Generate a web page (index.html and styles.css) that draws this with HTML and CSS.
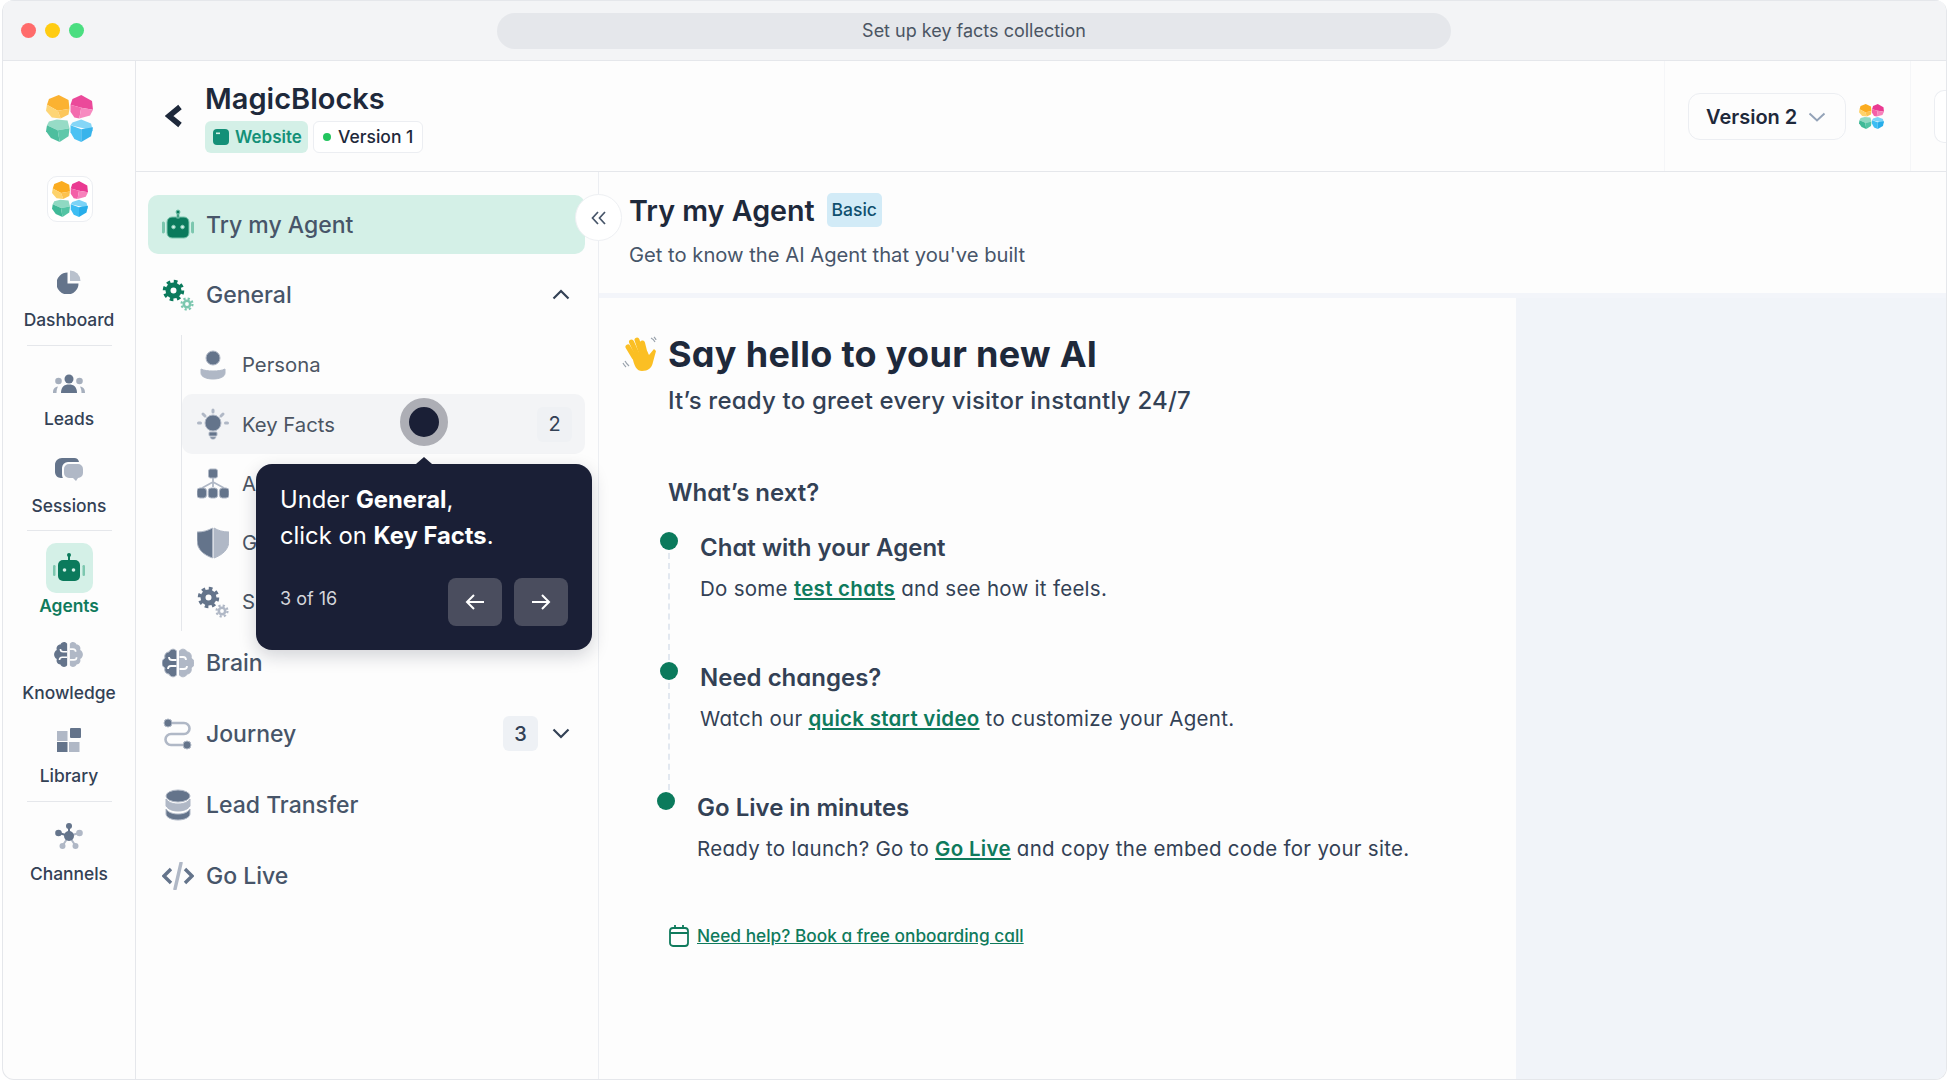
FILE: index.html
```html
<!DOCTYPE html>
<html lang="en">
<head>
    <meta charset="UTF-8">
    <meta name="viewport" content="width=device-width, initial-scale=1.0">
    <title>Try my Agent</title>
    <link rel="stylesheet" href="styles.css">
</head>

<body>
    <svg class="sprites" width="0" height="0">
        <symbol id="logo" viewBox="0 0 48 48">
            <polygon points="13,0 23,5 24,14 12,16 1,10 3,4" fill="#fbac20"/>
            <polygon points="1,10 12,16 15,24 6,23 0,16" fill="#fdd26b"/>
            <polygon points="12,16 24,14 23,20 15,24" fill="#fcc24e"/>
            <polygon points="36,0 47,6 48,15 36,13 25,10 27,4" fill="#ea3a92"/>
            <polygon points="25,10 36,13 34,24 29,23 25,17" fill="#f35fa8"/>
            <polygon points="36,13 48,15 45,21 34,24" fill="#f781bb"/>
            <polygon points="11,25 22,26 24,34 12,36 1,31 3,27" fill="#8fd9c2"/>
            <polygon points="1,31 12,36 14,48 5,44 0,37" fill="#3fb997"/>
            <polygon points="12,36 24,34 23,42 14,48" fill="#52c4a4"/>
            <polygon points="36,25 46,29 48,37 38,34 25,31 27,28" fill="#7bd3f7"/>
            <polygon points="25,31 36,35 36,48 29,45 25,38" fill="#3dbdf3"/>
            <polygon points="36,35 48,33 46,42 36,48" fill="#28aeea"/>
        </symbol>
        <symbol id="robot" viewBox="0 0 32 32">
            <rect x="5" y="8" width="22" height="21" rx="5" fill="currentColor"/>
            <rect x="15" y="3" width="2" height="6" fill="currentColor"/>
            <circle cx="16" cy="3" r="2" fill="currentColor"/>
            <circle cx="11.5" cy="18" r="1.8" fill="#d4f0e7"/>
            <circle cx="20.5" cy="18" r="1.8" fill="#d4f0e7"/>
            <rect x="0" y="13" width="2.5" height="11" rx="1.2" fill="#7cc7af"/>
            <rect x="29.5" y="13" width="2.5" height="11" rx="1.2" fill="#7cc7af"/>
        </symbol>
        <symbol id="gears" viewBox="0 0 32 32">
            <g fill="none" stroke="currentColor">
                <circle cx="11.5" cy="11.5" r="5.5" stroke-width="5"/>
                <circle cx="11.5" cy="11.5" r="9" stroke-width="3.5" stroke-dasharray="3.6 3.47"/>
            </g>
            <g fill="none" class="tone">
                <circle cx="25" cy="25" r="3.2" stroke-width="2.6"/>
                <circle cx="25" cy="25" r="5.5" stroke-width="2.2" stroke-dasharray="2.2 2.12"/>
            </g>
        </symbol>
        <symbol id="pie" viewBox="0 0 24 24">
            <path d="M10.5 2.5v11h11a11 11 0 1 1-11-11z" fill="#64748b"/>
            <path d="M13 0.5a10.5 10.5 0 0 1 10.5 10.5H13z" fill="#b9c1cd"/>
        </symbol>
        <symbol id="people" viewBox="0 0 32 20">
            <circle cx="16" cy="5" r="4.5" fill="#64748b"/>
            <path d="M8 19c0-6 3-8.500 8-8.500s8 2.500 8 8.500z" fill="#64748b"/>
            <circle cx="5.500" cy="7" r="3.300" fill="#a6afbd"/>
            <circle cx="26.500" cy="7" r="3.300" fill="#a6afbd"/>
            <path d="M0 19c0-4 1.500-6 5-6.500-1 2-1.500 4-1.500 6.500z" fill="#a6afbd"/>
            <path d="M32 19c0-4-1.500-6-5-6.500 1 2 1.500 4 1.500 6.500z" fill="#a6afbd"/>
        </symbol>
        <symbol id="chat" viewBox="0 0 28 24">
            <path d="M7 0h12a5 5 0 0 1 5 4H13a6 6 0 0 0-6 6v6c0 1.500 .3 3 1 4H6c-3.500 0-6-3-6-6V7c0-4 3-7 7-7z" fill="#64748b"/>
            <path d="M14 6h9a5 5 0 0 1 5 5v4a5 5 0 0 1-5 5l-2 3-3-3h-4a5 5 0 0 1-5-5v-4a5 5 0 0 1 5-5z" fill="#b0b8c6"/>
        </symbol>
        <symbol id="brain" viewBox="0 0 32 30">
            <path d="M14.500 3c-2-3-6.500-2-7.500 1-3 0-5 3-4 6-2 1-3 3-3 5s1 4 3 5c-1 3 1 6 4 6 1 3 5.500 4 7.500 1z" fill="#64748b"/>
            <path d="M17.500 3c2-3 6.500-2 7.500 1 3 0 5 3 4 6 2 1 3 3 3 5s-1 4-3 5c1 3-1 6-4 6-1 3-5.500 4-7.500 1z" fill="#b0b8c6"/>
            <path d="M14.500 12H10a3 3 0 0 1-3-3M14.500 18H9a3 3 0 0 0-3 3M17.500 9H21a3 3 0 0 1 3 3M17.500 21H22a3 3 0 0 0 3-3" fill="none" stroke="#fdfdfd" stroke-width="1.800"/>
        </symbol>
        <symbol id="squares" viewBox="0 0 24 24">
            <rect x="0" y="3" width="10.500" height="10" fill="#b0b8c6"/>
            <rect x="13" y="0" width="11" height="10" rx="1" fill="#64748b"/>
            <rect x="0" y="14" width="10.500" height="10" fill="#64748b"/>
            <rect x="12" y="14" width="10.500" height="10" fill="#b0b8c6"/>
        </symbol>
        <symbol id="nodes" viewBox="0 0 28 26">
            <g stroke="#64748b" stroke-width="2"><path d="M14 3v10M4 10l10 3"/></g>
            <g stroke="#b0b8c6" stroke-width="2"><path d="M14 13l10-3M14 13l-6 9M14 13l6 9"/></g>
            <circle cx="14" cy="13" r="5" fill="#64748b"/>
            <circle cx="14" cy="3" r="3" fill="#64748b"/>
            <circle cx="3.500" cy="10" r="3.300" fill="#64748b"/>
            <circle cx="24.500" cy="10" r="3.300" fill="#b0b8c6"/>
            <circle cx="7.500" cy="23" r="3" fill="#b0b8c6"/>
            <circle cx="20.500" cy="23" r="3" fill="#b0b8c6"/>
        </symbol>
    </svg>

    <div class="window">
        <header class="titlebar">
            <div class="lights">
                <span class="light light-red"></span>
                <span class="light light-yellow"></span>
                <span class="light light-green"></span>
            </div>
            <div class="address">Set up key facts collection</div>
        </header>

        <div class="app">
            <nav class="rail">
                <svg class="rail-logo"><use href="#logo"/></svg>
                <div class="rail-workspace"><svg><use href="#logo"/></svg></div>

                <a class="rail-item rail-dashboard"><svg width="24" height="24"><use href="#pie"/></svg><span>Dashboard</span></a>
                <hr class="rail-sep rail-sep-1">
                <a class="rail-item rail-leads"><svg width="32" height="20"><use href="#people"/></svg><span>Leads</span></a>
                <a class="rail-item rail-sessions"><svg width="28" height="24"><use href="#chat"/></svg><span>Sessions</span></a>
                <hr class="rail-sep rail-sep-2">
                <a class="rail-item rail-agents">
                    <span class="rail-active"><svg width="32" height="32"><use href="#robot"/></svg></span>
                    <span>Agents</span>
                </a>
                <a class="rail-item rail-knowledge"><svg width="29" height="27"><use href="#brain"/></svg><span>Knowledge</span></a>
                <a class="rail-item rail-library"><svg width="24" height="24"><use href="#squares"/></svg><span>Library</span></a>
                <hr class="rail-sep rail-sep-3">
                <a class="rail-item rail-channels"><svg width="28" height="26"><use href="#nodes"/></svg><span>Channels</span></a>
            </nav>

            <div class="workspace">
                <div class="topbar">
                    <svg class="back" width="18" height="24" viewBox="0 0 18 24"><path d="M15 3L4 12l11 9" fill="none" stroke="#1e293b" stroke-width="5.500"/></svg>
                    <div class="topbar-title">
                        <h1>MagicBlocks</h1>
                        <div class="tags">
                            <span class="tag tag-site">
                                <svg width="16" height="16" viewBox="0 0 16 16"><rect width="16" height="16" rx="4" fill="#149078"/><rect x="3" y="3.500" width="4" height="1.600" fill="#d4f0e7"/></svg>
                                Website
                            </span>
                            <span class="tag tag-version"><i class="tag-dot"></i>Version 1</span>
                        </div>
                    </div>
                    <div class="topbar-right">
                        <button class="version-btn">
                            Version 2
                            <svg width="18" height="10" viewBox="0 0 18 10"><path d="M1.500 1.500L9 8.500l7.500-7" fill="none" stroke="#94a3b8" stroke-width="2"/></svg>
                        </button>
                        <svg class="mini-logo"><use href="#logo"/></svg>
                    </div>
                    <div class="topbar-edge"><div class="edge-btn"></div></div>
                </div>

                <div class="columns">
                    <aside class="sidebar">
                        <a class="row row-active">
                            <svg class="row-icon icon-green" width="32" height="32"><use href="#robot"/></svg>
                            Try my Agent
                        </a>
                        <a class="row row-open">
                            <svg class="row-icon icon-green gears-green" width="32" height="32"><use href="#gears"/></svg>
                            General
                            <svg class="caret" width="18" height="11" viewBox="0 0 18 11"><path d="M1.500 9.500L9 2l7.500 7.500" fill="none" stroke="#334155" stroke-width="2.200"/></svg>
                        </a>
                        <div class="sublist">
                            <a class="subrow">
                                <svg class="row-icon" width="32" height="32" viewBox="0 0 32 32"><circle cx="16" cy="9" r="7" fill="#64748b"/><path d="M4 20c3 1.500 7 2 12 2s9-.5 12-2v4c0 4-6 6-12 6S4 28 4 24z" fill="#b0b8c6"/></svg>
                                Persona
                            </a>
                            <a class="subrow subrow-hover">
                                <svg class="row-icon" width="32" height="32" viewBox="0 0 32 32"><circle cx="16" cy="15" r="8" fill="#64748b"/><rect x="12" y="24" width="8" height="4" rx="1" fill="#64748b"/><path d="M13 29h6l-1.500 2h-3z" fill="#64748b"/><g stroke="#b0b8c6" stroke-width="3" stroke-linecap="round"><path d="M16 2v2M6 6l2 2M26 6l-2 2M1.500 15h2M28.500 15h2"/></g></svg>
                                Key Facts
                                <span class="count count-sub">2</span>
                            </a>
                            <a class="subrow">
                                <svg class="row-icon" width="32" height="32" viewBox="0 0 32 32"><rect x="11.500" y="1" width="9" height="9" rx="2" fill="#64748b"/><path d="M16 10v9M16 14L5 20M16 14l11 6" fill="none" stroke="#b0b8c6" stroke-width="1.800"/><rect x="0" y="20" width="9.500" height="10" rx="3" fill="#64748b"/><rect x="11.200" y="20" width="9.500" height="10" rx="3" fill="#64748b"/><rect x="22.500" y="20" width="9.500" height="10" rx="3" fill="#64748b"/></svg>
                                A
                            </a>
                            <a class="subrow">
                                <svg class="row-icon" width="32" height="32" viewBox="0 0 32 32"><path d="M15.500 1v30C7 28 0 23 0 13V5c6 0 11-1.500 15.500-4z" fill="#64748b"/><path d="M17 1v30c8-3 15-8 15-18V5c-6 0-11-1.500-15-4z" fill="#b0b8c6"/></svg>
                                G
                            </a>
                            <a class="subrow">
                                <svg class="row-icon" width="32" height="32"><use href="#gears"/></svg>
                                S
                            </a>
                        </div>
                        <a class="row">
                            <svg class="row-icon" width="32" height="30"><use href="#brain"/></svg>
                            Brain
                        </a>
                        <a class="row">
                            <svg class="row-icon" width="32" height="32" viewBox="0 0 32 32"><path d="M8 5h14a5.500 5.500 0 0 1 0 11H9a5.500 5.500 0 0 0 0 11h14" fill="none" stroke="#b0b8c6" stroke-width="2.600"/><circle cx="6" cy="5" r="4" fill="#64748b"/><circle cx="25" cy="27" r="4" fill="#64748b"/></svg>
                            Journey
                            <span class="count">3</span>
                            <svg class="caret caret-after" width="18" height="11" viewBox="0 0 18 11"><path d="M1.500 1.500L9 9l7.500-7.500" fill="none" stroke="#334155" stroke-width="2.200"/></svg>
                        </a>
                        <a class="row">
                            <svg class="row-icon" width="32" height="32" viewBox="0 0 32 32"><ellipse cx="16" cy="7" rx="12" ry="6" fill="#64748b"/><path d="M4 10c2 3 6 5 12 5s10-2 12-5v7c-2 3-6 5-12 5S6 20 4 17z" fill="#b0b8c6"/><path d="M4 20c2 3 6 5 12 5s10-2 12-5v5c0 3-5 6-12 6S4 28 4 25z" fill="#64748b"/></svg>
                            Lead Transfer
                        </a>
                        <a class="row">
                            <svg class="row-icon" width="32" height="28" viewBox="0 0 32 28"><path d="M9 7L2 14l7 7M23 7l7 7-7 7" fill="none" stroke="#64748b" stroke-width="3.400"/><path d="M19 1l-6 26" stroke="#b0b8c6" stroke-width="3.400" stroke-linecap="round"/></svg>
                            Go Live
                        </a>

                        <div class="collapse-btn">
                            <svg width="16" height="14" viewBox="0 0 16 14"><path d="M7 1L1.500 7 7 13M14 1L8.500 7l5.500 6" fill="none" stroke="#475569" stroke-width="1.700"/></svg>
                        </div>

                        <div class="pulse"></div>

                        <div class="tour">
                            <p>Under <b>General</b>,<br>click on <b>Key Facts</b>.</p>
                            <div class="tour-foot">
                                <span class="tour-count">3 of 16</span>
                                <div class="tour-btns">
                                    <button class="tour-btn"><svg width="20" height="16" viewBox="0 0 20 16"><path d="M19 8H2M9 1L2 8l7 7" fill="none" stroke="#fff" stroke-width="2"/></svg></button>
                                    <button class="tour-btn"><svg width="20" height="16" viewBox="0 0 20 16"><path d="M1 8h17M11 1l7 7-7 7" fill="none" stroke="#fff" stroke-width="2"/></svg></button>
                                </div>
                            </div>
                        </div>
                    </aside>

                    <main class="content">
                        <div class="page-head">
                            <div class="page-title">
                                <h2>Try my Agent</h2>
                                <span class="plan">Basic</span>
                            </div>
                            <p>Get to know the AI Agent that you've built</p>
                        </div>

                        <div class="page-body">
                            <section class="panel">
                                <div class="hello">
                                    <svg class="wave" width="36" height="36" viewBox="0 0 36 36">
                                        <g stroke="#fbbf24" stroke-width="5" stroke-linecap="round">
                                            <path d="M12 21L6 11"/><path d="M15 18L9.500 6"/><path d="M19 16L15 4"/><path d="M23 17L20.500 7"/>
                                        </g>
                                        <path d="M10 19l15-4 2 4 5-6 2 2-3 11c-1 6-5 9-11 9-5 0-8-4-10-16z" fill="#fbbf24"/>
                                        <path d="M3 25c1 2 2 3 4 5M1 27c1 2 2 3 3 4M29 2c2 1 3 2 4 4M32 1c1 1 2 2 2 3" fill="none" stroke="#9aa3ad" stroke-width="1.200"/>
                                    </svg>
                                    <h3>Say hello to your new AI</h3>
                                </div>
                                <p class="hello-sub">It’s ready to greet every visitor instantly 24/7</p>

                                <h4 class="next">What’s next?</h4>

                                <div class="step">
                                    <div class="step-mark"><i class="step-dot"></i><i class="step-line"></i></div>
                                    <div>
                                        <h5>Chat with your Agent</h5>
                                        <p>Do some <a>test chats</a> and see how it feels.</p>
                                    </div>
                                </div>
                                <div class="step">
                                    <div class="step-mark"><i class="step-dot"></i><i class="step-line"></i></div>
                                    <div>
                                        <h5>Need changes?</h5>
                                        <p>Watch our <a>quick start video</a> to customize your Agent.</p>
                                    </div>
                                </div>
                                <div class="step step-last">
                                    <div class="step-mark"><i class="step-dot"></i></div>
                                    <div>
                                        <h5>Go Live in minutes</h5>
                                        <p>Ready to launch? Go to <a>Go Live</a> and copy the embed code for your site.</p>
                                    </div>
                                </div>

                                <a class="help">
                                    <svg width="20" height="22" viewBox="0 0 20 22"><rect x="1" y="3" width="18" height="18" rx="3" fill="none" stroke="#0f7a5c" stroke-width="1.800"/><path d="M1 8h18M6 0v4M14 0v4" fill="none" stroke="#0f7a5c" stroke-width="1.800"/></svg>
                                    <span>Need help? Book a free onboarding call</span>
                                </a>
                            </section>
                            <div class="gutter"></div>
                        </div>
                    </main>
                </div>
            </div>
        </div>
    </div>
</body>
</html>
```

FILE: styles.css
```css
* {
    box-sizing: border-box;
}

body {
    font-family: Inter, "Liberation Sans", sans-serif;
    margin: 0;
    background: #ffffff;
    color: #1e293b;
    overflow: hidden;
}

a {
    text-decoration: none;
}

h1, h2, h3, h4, h5, p {
    margin: 0;
}

.sprites {
    position: absolute;
}

.window {
    width: 1945px;
    height: 1080px;
    margin-left: 2px;
    border: 1px solid #e5e7eb;
    border-top: 0;
    border-radius: 12px;
    overflow: hidden;
    display: flex;
    flex-direction: column;
    background: #fdfdfd;
}

/* title bar */
.titlebar {
    height: 61px;
    flex: none;
    background: #f3f4f6;
    border-top: 1px solid #e5e7eb;
    border-bottom: 1px solid #e5e7eb;
    display: flex;
    align-items: center;
    position: relative;
    padding-left: 18px;
}

.lights {
    display: flex;
    gap: 9px;
}

.light {
    width: 15px;
    height: 15px;
    border-radius: 50%;
}

.light-red { background: #ff6b6b; }
.light-yellow { background: #ffcc12; }
.light-green { background: #4ade80; }

.address {
    margin-left: 413px;
    width: 954px;
    height: 36px;
    border-radius: 18px;
    background: #e5e7eb;
    color: #4b5563;
    font-size: 18px;
    line-height: 36px;
    text-align: center;
}

.app {
    flex: 1;
    display: flex;
    min-height: 0;
}

/* left rail */
.rail {
    width: 133px;
    flex: none;
    border-right: 1px solid #e5e7eb;
    display: flex;
    flex-direction: column;
    align-items: center;
    padding-top: 34px;
}

.rail-logo {
    width: 47px;
    height: 47px;
    opacity: 0.92;
    margin-left: 1px;
}

.rail-workspace {
    width: 46px;
    height: 46px;
    margin-top: 34px;
    margin-left: 1px;
    padding: 4px;
    background: #fff;
    border: 1px solid #eceef2;
    border-radius: 10px;
    display: flex;
}

.rail-workspace svg {
    width: 36px;
    height: 36px;
}

.rail-item {
    display: flex;
    flex-direction: column;
    align-items: center;
    font-size: 17.4px;
    font-weight: 500;
    color: #334155;
    line-height: 22px;
}

.rail-item svg {
    display: block;
}

.rail-dashboard { margin-top: 48px; gap: 15px; }
.rail-leads { margin-top: 28px; gap: 14px; }
.rail-sessions { margin-top: 28px; gap: 13px; }
.rail-agents { margin-top: 12px; gap: 2px; color: #0f7a5c; font-weight: 600; }
.rail-knowledge { margin-top: 24px; gap: 14px; }
.rail-library { margin-top: 24px; gap: 13px; }
.rail-channels { margin-top: 21px; gap: 14px; }

.rail-sep {
    width: 85px;
    height: 1px;
    border: 0;
    margin: 0;
    background: #e5e7eb;
}

.rail-sep-1 { margin-top: 14px; }
.rail-sep-2 { margin-top: 13px; }
.rail-sep-3 { margin-top: 14px; }

.rail-active {
    width: 47px;
    height: 50px;
    border-radius: 10px;
    background: #d4f0e7;
    color: #0b7a5c;
    display: flex;
    align-items: center;
    justify-content: center;
}

.workspace {
    flex: 1;
    min-width: 0;
    display: flex;
    flex-direction: column;
}

/* top bar */
.topbar {
    height: 111px;
    flex: none;
    border-bottom: 1px solid #e5e7eb;
    display: flex;
    align-items: center;
    padding-left: 29px;
}

.back {
    margin-right: 22px;
}

.topbar-title h1 {
    font-size: 29px;
    font-weight: 600;
    line-height: 36px;
    color: #1e293b;
    margin-top: 1px;
}

.tags {
    display: flex;
    gap: 5px;
    margin-top: 4px;
}

.tag {
    height: 32px;
    font-size: 17.5px;
    font-weight: 600;
    display: flex;
    align-items: center;
    border-radius: 6px;
}

.tag-site {
    width: 103px;
    gap: 6px;
    padding-left: 8px;
    background: #d4f0e7;
    color: #149078;
    font-size: 17px;
}

.tag-version {
    width: 110px;
    gap: 7px;
    padding-left: 9px;
    background: #fff;
    border: 1px solid #eceef2;
    font-weight: 500;
}

.tag-dot {
    width: 8px;
    height: 8px;
    border-radius: 50%;
    background: #22c55e;
}

.topbar-right {
    margin-left: auto;
    height: 100%;
    width: 247px;
    border-left: 1px solid #f5f6f8;
    border-right: 1px solid #f5f6f8;
    display: flex;
    align-items: center;
    padding-left: 23px;
}

.version-btn {
    width: 158px;
    height: 47px;
    background: #fdfdfd;
    border: 1px solid #eceef2;
    border-radius: 12px;
    font-family: inherit;
    font-size: 20px;
    font-weight: 600;
    color: #1e293b;
    display: flex;
    align-items: center;
    gap: 11px;
    padding: 2px 0 0 17px;
}

.mini-logo {
    width: 25px;
    height: 25px;
    margin-left: 13px;
}

.topbar-edge {
    width: 35px;
    flex: none;
    padding-left: 23px;
}

.edge-btn {
    width: 20px;
    height: 53px;
    background: #fff;
    border: 1px solid #eceef2;
    border-radius: 10px 0 0 10px;
    border-right: 0;
}

.columns {
    flex: 1;
    display: flex;
    min-height: 0;
}

/* sidebar */
.sidebar {
    width: 463px;
    flex: none;
    position: relative;
    border-right: 1px solid #eceef2;
    padding: 23px 13px 0 12px;
}

.row {
    height: 59px;
    margin-bottom: 12px;
    display: flex;
    align-items: center;
    gap: 12px;
    padding: 0 14px;
    border-radius: 10px;
    font-size: 23px;
    font-weight: 500;
    color: #475569;
}

.row-icon {
    flex: none;
    color: #64748b;
    stroke: #b0b8c6;
}

.row-icon .tone, .tone {
    stroke: inherit;
}

.icon-green {
    color: #0b7a5c;
    stroke: #7cc7af;
}

.row-active {
    background: #d4f0e7;
    margin-bottom: 11px;
}

.row-open {
    margin-bottom: 11px;
}

.caret {
    margin-left: auto;
    margin-right: 1px;
}

.caret-after {
    margin-left: 0;
    margin-right: 1px;
}

.count {
    margin-left: auto;
    width: 35px;
    height: 35px;
    border-radius: 6px;
    background: #eef1f5;
    color: #334155;
    font-size: 20px;
    display: flex;
    align-items: center;
    justify-content: center;
    margin-right: 2px;
}

.sublist {
    margin: 0 0 2px 33px;
    border-left: 1px solid #e5e7eb;
}

.subrow {
    height: 59px;
    display: flex;
    align-items: center;
    gap: 13px;
    padding: 0 13px 0 15px;
    font-size: 20.3px;
    color: #4b5563;
    border-radius: 10px;
}

.subrow-hover {
    background: #f3f4f6;
    height: 60px;
}

.count-sub {
    background: #eff1f4;
    margin-right: 0;
}

.collapse-btn {
    position: absolute;
    left: 439px;
    top: 22px;
    width: 47px;
    height: 47px;
    border-radius: 50%;
    background: #fff;
    border: 1px solid #eef0f3;
    display: flex;
    align-items: center;
    justify-content: center;
    z-index: 2;
}

.pulse {
    position: absolute;
    left: 264px;
    top: 226px;
    width: 48px;
    height: 48px;
    border-radius: 50%;
    background: #1a1f36;
    border: 9px solid #adaeb5;
}

.tour {
    position: absolute;
    left: 120px;
    top: 292px;
    width: 336px;
    height: 186px;
    background: #1a1f36;
    border-radius: 16px;
    padding: 18px 24px 24px;
    color: #fff;
    box-shadow: 0 6px 18px rgba(15, 23, 42, 0.18);
    z-index: 3;
}

.tour::before {
    content: "";
    position: absolute;
    left: 160px;
    top: -7px;
    border-left: 8px solid transparent;
    border-right: 8px solid transparent;
    border-bottom: 7px solid #1a1f36;
}

.tour p {
    font-size: 23.8px;
    line-height: 36px;
}

.tour b {
    font-weight: 700;
}

.tour-foot {
    display: flex;
    justify-content: space-between;
    margin-top: 24px;
}

.tour-count {
    font-size: 18px;
    color: #d5d6db;
    line-height: 42px;
}

.tour-btns {
    display: flex;
    gap: 12px;
}

.tour-btn {
    width: 54px;
    height: 48px;
    border: 0;
    border-radius: 8px;
    background: #4a4d5e;
    padding: 0;
    display: flex;
    align-items: center;
    justify-content: center;
}

/* content */
.content {
    flex: 1;
    min-width: 0;
    display: flex;
    flex-direction: column;
}

.page-head {
    height: 126px;
    flex: none;
    padding: 20px 0 0 30px;
    border-bottom: 5px solid #f3f5fa;
}

.page-title {
    display: flex;
    align-items: center;
    gap: 12px;
    height: 38px;
}

.page-title h2 {
    font-size: 28.7px;
    font-weight: 600;
    line-height: 38px;
    color: #1e293b;
}

.plan {
    width: 55px;
    height: 34px;
    margin-top: -2px;
    background: #d2ebf7;
    color: #0e4f6e;
    border-radius: 5px;
    font-size: 17.5px;
    font-weight: 500;
    line-height: 34px;
    text-align: center;
}

.page-head p {
    margin-top: 11px;
    font-size: 20.2px;
    line-height: 28px;
    color: #475569;
}

.page-body {
    flex: 1;
    display: flex;
    min-height: 0;
}

.panel {
    width: 917px;
    flex: none;
    padding: 34px 0 0 69px;
    background: #fdfdfd;
    font-feature-settings: "cv11";
}

.gutter {
    flex: 1;
    background: #f1f4f9;
}

.hello {
    display: flex;
    align-items: center;
    gap: 10px;
    margin-left: -46px;
}

.hello h3 {
    font-size: 36px;
    font-weight: 700;
    line-height: 44px;
    letter-spacing: 0.3px;
    color: #1e293b;
}

.hello-sub {
    margin-top: 9px;
    font-size: 24px;
    font-weight: 500;
    line-height: 32px;
    letter-spacing: 0.2px;
    color: #334155;
}

.next {
    margin-top: 60px;
    font-size: 24px;
    font-weight: 600;
    line-height: 32px;
    color: #334155;
}

.next + .step {
    margin-top: 24px;
}

.step {
    height: 130px;
    display: flex;
    gap: 22px;
    margin-left: -8px;
}

.step-last {
    margin-left: -11px;
}

.step-mark {
    width: 18px;
    flex: none;
    display: flex;
    flex-direction: column;
    align-items: center;
    margin-top: -1px;
}

.step-dot {
    width: 18px;
    height: 18px;
    border-radius: 50%;
    background: #0b7a5c;
    flex: none;
}

.step-line {
    flex: 1;
    border-left: 2px dashed #e2e8f0;
    margin: 3px 0 3px;
}

.step h5 {
    font-size: 24px;
    font-weight: 600;
    line-height: 30px;
    color: #334155;
}

.step p {
    margin-top: 12px;
    font-size: 20.5px;
    line-height: 28px;
    letter-spacing: 0.28px;
    color: #334155;
}

.step a {
    color: #0f7a5c;
    font-weight: 600;
    text-decoration: underline;
}

.help {
    display: flex;
    align-items: center;
    gap: 8px;
    margin-left: 1px;
    margin-top: 1px;
    font-size: 17.3px;
    font-weight: 500;
    line-height: 24px;
    color: #0f7a5c;
}

.help span {
    text-decoration: underline;
}
```
